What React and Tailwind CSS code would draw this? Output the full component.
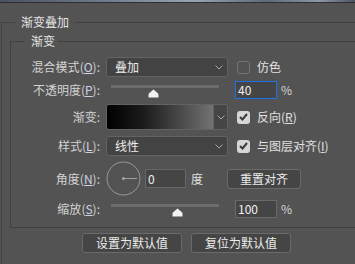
import React from 'react';

const font = { fontFamily: '"Noto Sans CJK SC", "Noto Sans", sans-serif' };

const Chevron = () => (
  <svg width="8" height="5" viewBox="0 0 8 5" fill="none">
    <path d="M0.5 0.5L4 4L7.5 0.5" stroke="#a8a8a8" strokeWidth="1" />
  </svg>
);

const Thumb = () => (
  <svg width="11" height="9" viewBox="0 0 11 9">
    <path d="M5.5 0.5C6.5 1.5 8.5 3 9.8 4.2C10.5 4.8 10.5 5.5 10.5 6.5V8.5H0.5V6.5C0.5 5.5 0.5 4.8 1.2 4.2C2.5 3 4.5 1.5 5.5 0.5Z" fill="#f2f2f2" />
  </svg>
);

const Check = ({ checked }) => (
  <div
    className={
      checked
        ? 'w-[13px] h-[13px] rounded-[3px] bg-[#d6d6d6] flex items-center justify-center'
        : 'w-[13px] h-[13px] rounded-[3px] border border-[#747474] bg-[#535353]'
    }
  >
    {checked && (
      <svg width="9" height="8" viewBox="0 0 9 8" fill="none">
        <path d="M1 4L3.5 6.5L8 1" stroke="#3a3a3a" strokeWidth="2" />
      </svg>
    )}
  </div>
);

const Label = ({ text, k }) => (
  <div className="w-[89px] shrink-0 text-right text-[12px] text-[#d2d2d2] leading-[16px]">
    {text}(<span className="underline text-[#c9d4e6]">{k}</span>):
  </div>
);

const Slider = ({ pos }) => (
  <div className="relative w-[108px] h-[18px] ml-[11px]">
    <div className="absolute left-0 right-0 top-[4px] h-[3px] bg-[#6c6c6c]" />
    <div className="absolute top-[8px]" style={{ left: pos - 5 }}>
      <Thumb />
    </div>
  </div>
);

const Select = ({ value }) => (
  <div className="ml-[6px] w-[122px] h-[20px] rounded-[3px] border border-[#626262] bg-[#434343] flex items-center justify-between pl-[8px] pr-[4px] text-[12px] text-[#ececec]">
    <span>{value}</span>
    <Chevron />
  </div>
);

const App = () => {
  return (
    <div className="w-[355px] h-[264px] overflow-hidden bg-[#535353] text-[#d6d6d6]" style={font}>
      <div className="h-[2px] bg-[linear-gradient(to_right,#4a5260,#6f7c8f_30%,#98a4b6_55%,#5d6878_75%,#8c97a8_90%,#4c5462)]" />
      <div className="h-[1px] bg-[#2f2f2f]" />

      <fieldset className="mt-[11px] ml-[1px] w-[420px] h-[300px] border border-[#414141]">
        <legend className="ml-[13px] px-[6px] text-[12px] leading-[16px] text-[#e4e4e4]">渐变叠加</legend>

        <div className="pl-[8px]">
          <fieldset className="mt-[3px] w-[420px] border border-[#414141] pb-[9px]">
            <legend className="ml-[13px] pl-[7px] pr-[3px] text-[12px] leading-[16px] text-[#e4e4e4]">渐变</legend>

            {/* 混合模式 */}
            <div className="mt-[8px] h-[20px] flex items-center">
              <Label text="混合模式" k="O" />
              <Select value="叠加" />
              <div className="ml-[9px]"><Check checked={false} /></div>
              <span className="ml-[7px] text-[12px] text-[#e0e0e0]">仿色</span>
            </div>

            {/* 不透明度 */}
            <div className="mt-[4px] h-[18px] flex items-center">
              <Label text="不透明度" k="P" />
              <Slider pos={42} />
              <div className="ml-[16px] w-[42px] h-[18px] border border-[#1a73e8] bg-[#454545] text-[12px] text-[#f0f0f0] leading-[16px] pl-[2px]">40</div>
              <span className="ml-[4px] text-[12px]">%</span>
            </div>

            {/* 渐变 */}
            <div className="mt-[5px] h-[26px] flex items-center">
              <div className="w-[89px] shrink-0 text-right text-[12px] text-[#d2d2d2]">渐变:</div>
              <div className="ml-[6px] w-[122px] h-[26px] rounded-[3px] border border-[#626262] flex overflow-hidden">
                <div className="flex-1 bg-[linear-gradient(to_right,#000000,#1c1c1c_35%,#727272)]" />
                <div className="w-[14px] bg-[#454545] border-l border-[#626262] flex items-center justify-center">
                  <Chevron />
                </div>
              </div>
              <div className="ml-[9px]"><Check checked /></div>
              <span className="ml-[7px] text-[12px] text-[#e0e0e0]">反向(<span className="underline">R</span>)</span>
            </div>

            {/* 样式 */}
            <div className="mt-[6px] h-[20px] flex items-center">
              <Label text="样式" k="L" />
              <Select value="线性" />
              <div className="ml-[9px]"><Check checked /></div>
              <span className="ml-[7px] text-[12px] text-[#e0e0e0]">与图层对齐(<span className="underline">I</span>)</span>
            </div>

            {/* 角度 */}
            <div className="mt-[5px] h-[35px] flex items-center">
              <Label text="角度" k="N" />
              <svg className="ml-[6px]" width="35" height="35" viewBox="0 0 35 35" fill="none">
                <circle cx="17.5" cy="17.5" r="16.5" stroke="#9a9a9a" strokeWidth="1" />
                <circle cx="17.5" cy="17.5" r="1.6" fill="#a0a0a0" />
                <line x1="17.5" y1="17.5" x2="31" y2="17.5" stroke="#a0a0a0" strokeWidth="1" />
              </svg>
              <div className="ml-[4px] w-[41px] h-[19px] border border-[#666666] bg-[#454545] text-[12px] text-[#f0f0f0] leading-[17px] pl-[2px]">0</div>
              <span className="ml-[5px] text-[12px] text-[#e0e0e0]">度</span>
              <button className="ml-[24px] w-[74px] h-[20px] rounded-[3px] border border-[#6a6a6a] bg-[#454545] text-[12px] text-[#ececec] leading-[18px]">重置对齐</button>
            </div>

            {/* 缩放 */}
            <div className="mt-[4px] h-[18px] flex items-center">
              <Label text="缩放" k="S" />
              <Slider pos={66} />
              <div className="ml-[16px] w-[42px] h-[18px] border border-[#6a6a6a] bg-[#454545] text-[12px] text-[#f0f0f0] leading-[16px] pl-[2px]">100</div>
              <span className="ml-[4px] text-[12px]">%</span>
            </div>
          </fieldset>
        </div>

        <div className="mt-[5px] ml-[80px] flex gap-[9px]">
          <button className="w-[100px] h-[20px] rounded-[3px] border border-[#6a6a6a] bg-[#454545] text-[12px] text-[#ececec] leading-[18px]">设置为默认值</button>
          <button className="w-[100px] h-[20px] rounded-[3px] border border-[#6a6a6a] bg-[#454545] text-[12px] text-[#ececec] leading-[18px]">复位为默认值</button>
        </div>
      </fieldset>
    </div>
  );
};

export default App;
